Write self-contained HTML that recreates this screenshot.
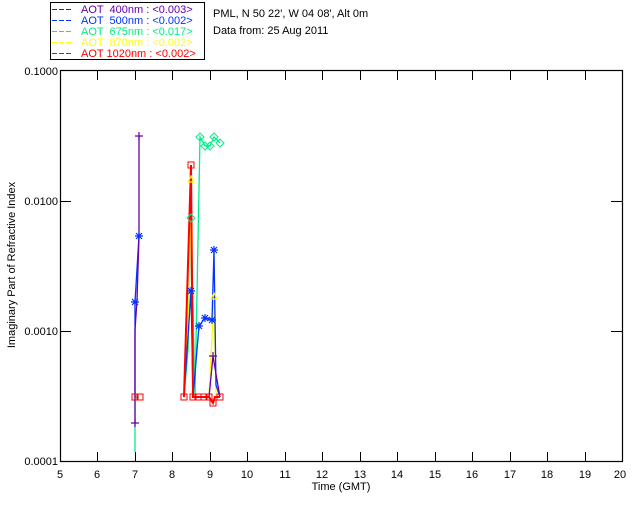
<!DOCTYPE html>
<html><head><style>
html,body{margin:0;padding:0;background:#fff;width:640px;height:512px;overflow:hidden}
svg text{font-family:"Liberation Sans",sans-serif;font-size:11px}
</style></head><body>
<svg width="640" height="512" xmlns="http://www.w3.org/2000/svg">
<rect x="0" y="0" width="640" height="512" fill="#fff"/>
<rect x="50.5" y="2.5" width="154" height="57" fill="none" stroke="#000" stroke-width="1"/>
<g stroke-width="1" stroke-dasharray="5,2">
<line x1="52" y1="9.5" x2="73" y2="9.5" stroke="#6600aa"/>
<line x1="52" y1="20.5" x2="73" y2="20.5" stroke="#0033ff"/>
<line x1="52" y1="31.5" x2="73" y2="31.5" stroke="#00ee88"/>
<line x1="52" y1="42.5" x2="73" y2="42.5" stroke="#ffff00"/>
<line x1="52" y1="53.5" x2="73" y2="53.5" stroke="#ff0000"/>
</g>
<text x="81" y="13" fill="#6600aa" xml:space="preserve">AOT  400nm : &lt;0.003&gt;</text>
<text x="81" y="24" fill="#0033ff" xml:space="preserve">AOT  500nm : &lt;0.002&gt;</text>
<text x="81" y="35" fill="#00ee88" xml:space="preserve">AOT  675nm : &lt;0.017&gt;</text>
<text x="81" y="46" fill="#ffff00" xml:space="preserve">AOT  870nm : &lt;0.002&gt;</text>
<text x="81" y="57" fill="#ff0000" xml:space="preserve">AOT 1020nm : &lt;0.002&gt;</text>
<text x="213" y="17" fill="#000">PML, N 50 22', W 04 08', Alt 0m</text>
<text x="213" y="34" fill="#000">Data from: 25 Aug 2011</text>
<rect x="60.5" y="70.5" width="562" height="391" fill="none" stroke="#000" stroke-width="1.2"/>
<g stroke="#000" stroke-width="1">
<line x1="97.5" y1="461" x2="97.5" y2="452"/><line x1="97.5" y1="71" x2="97.5" y2="80"/>
<line x1="135.5" y1="461" x2="135.5" y2="452"/><line x1="135.5" y1="71" x2="135.5" y2="80"/>
<line x1="172.5" y1="461" x2="172.5" y2="452"/><line x1="172.5" y1="71" x2="172.5" y2="80"/>
<line x1="210.5" y1="461" x2="210.5" y2="452"/><line x1="210.5" y1="71" x2="210.5" y2="80"/>
<line x1="247.5" y1="461" x2="247.5" y2="452"/><line x1="247.5" y1="71" x2="247.5" y2="80"/>
<line x1="285.5" y1="461" x2="285.5" y2="452"/><line x1="285.5" y1="71" x2="285.5" y2="80"/>
<line x1="322.5" y1="461" x2="322.5" y2="452"/><line x1="322.5" y1="71" x2="322.5" y2="80"/>
<line x1="360.5" y1="461" x2="360.5" y2="452"/><line x1="360.5" y1="71" x2="360.5" y2="80"/>
<line x1="397.5" y1="461" x2="397.5" y2="452"/><line x1="397.5" y1="71" x2="397.5" y2="80"/>
<line x1="435.5" y1="461" x2="435.5" y2="452"/><line x1="435.5" y1="71" x2="435.5" y2="80"/>
<line x1="472.5" y1="461" x2="472.5" y2="452"/><line x1="472.5" y1="71" x2="472.5" y2="80"/>
<line x1="510.5" y1="461" x2="510.5" y2="452"/><line x1="510.5" y1="71" x2="510.5" y2="80"/>
<line x1="547.5" y1="461" x2="547.5" y2="452"/><line x1="547.5" y1="71" x2="547.5" y2="80"/>
<line x1="585.5" y1="461" x2="585.5" y2="452"/><line x1="585.5" y1="71" x2="585.5" y2="80"/>
<line x1="60" y1="201.5" x2="71" y2="201.5"/><line x1="622" y1="201.5" x2="611" y2="201.5"/>
<line x1="60" y1="331.5" x2="71" y2="331.5"/><line x1="622" y1="331.5" x2="611" y2="331.5"/>
</g>
<g fill="#000" text-anchor="middle">
<text x="60" y="478">5</text><text x="97" y="478">6</text><text x="135" y="478">7</text><text x="172" y="478">8</text><text x="210" y="478">9</text><text x="247" y="478">10</text><text x="285" y="478">11</text><text x="322" y="478">12</text><text x="360" y="478">13</text><text x="397" y="478">14</text><text x="435" y="478">15</text><text x="472" y="478">16</text><text x="510" y="478">17</text><text x="547" y="478">18</text><text x="585" y="478">19</text><text x="620" y="478">20</text>
<text x="341" y="490">Time (GMT)</text>
</g>
<g fill="#000" text-anchor="end">
<text x="58" y="75">0.1000</text><text x="58" y="205">0.0100</text><text x="58" y="335">0.0010</text><text x="58" y="465">0.0001</text>
</g>
<text transform="translate(15,265) rotate(-90)" text-anchor="middle" fill="#000" font-size="10">Imaginary Part of Refractive Index</text>
<g fill="none" stroke-width="1.3">
<polyline stroke="#00ee88" points="135,452 135,397 139,397"/>
<polyline stroke="#00ee88" points="184,397 188,350 191,218 195,397 200,137 205,146 210,146 214,137 220,143"/>
<polyline stroke="#0033ff" points="135,397 135,302 139,236"/>
<polyline stroke="#6600aa" points="135,423 135,330 137,300 139,236 139,136"/>
<polyline stroke="#ffff00" points="184,397 189,300 191,180 193,397 198,397 204,397 209,397 214,297 216,397 220,397"/>
<polyline stroke="#0033ff" points="184,397 191,291 193,397 199,326 205,318 212,320 214,250 216,385 220,397"/>
<polyline stroke="#6600aa" points="209,397 213,356 217,380 220,397"/>
<polyline stroke="#ff0000" stroke-width="2" points="184,397 191,165 193,397 198,397 204,397 209,397 213,403 215,397 220,397"/>
</g>
<g fill="none" stroke="#ff0000" stroke-width="1">
<rect x="132" y="394" width="6" height="6"/><rect x="137" y="394" width="6" height="6"/>
<rect x="181" y="394" width="6" height="6"/><rect x="190" y="394" width="6" height="6"/><rect x="195" y="394" width="6" height="6"/><rect x="201" y="394" width="6" height="6"/><rect x="206" y="394" width="6" height="6"/><rect x="210" y="400" width="6" height="6"/><rect x="217" y="394" width="6" height="6"/>
<rect x="188" y="162" width="6" height="6"/>
</g>
<g fill="none" stroke="#00ee88" stroke-width="1">
<path d="M200 133l4 4-4 4-4-4z M205 142l4 4-4 4-4-4z M210 142l4 4-4 4-4-4z M214 133l4 4-4 4-4-4z M220 139l4 4-4 4-4-4z M191 214l4 4-4 4-4-4z"/>
</g>
<g stroke="#0033ff" stroke-width="1.2">
<path d="M131 302h8M135 298v8M132 299l6 6M138 299l-6 6 M135 236h8M139 232v8M136 233l6 6M142 233l-6 6 M187 291h8M191 287v8M188 288l6 6M194 288l-6 6 M195 326h8M199 322v8M196 323l6 6M202 323l-6 6 M201 318h8M205 314v8M202 315l6 6M208 315l-6 6 M208 320h8M212 316v8M209 317l6 6M215 317l-6 6 M210 250h8M214 246v8M211 247l6 6M217 247l-6 6"/>
</g>
<g stroke="#6600aa" stroke-width="1.2">
<path d="M135 136h8M139 132v8 M131 423h8M135 419v8 M209 356h8M213 352v8"/>
</g>
<g stroke="#ffff00" fill="none" stroke-width="1.2">
<path d="M191 176l3 6h-6z M214 293l3 6h-6z"/>
</g>
</svg>
</body></html>
